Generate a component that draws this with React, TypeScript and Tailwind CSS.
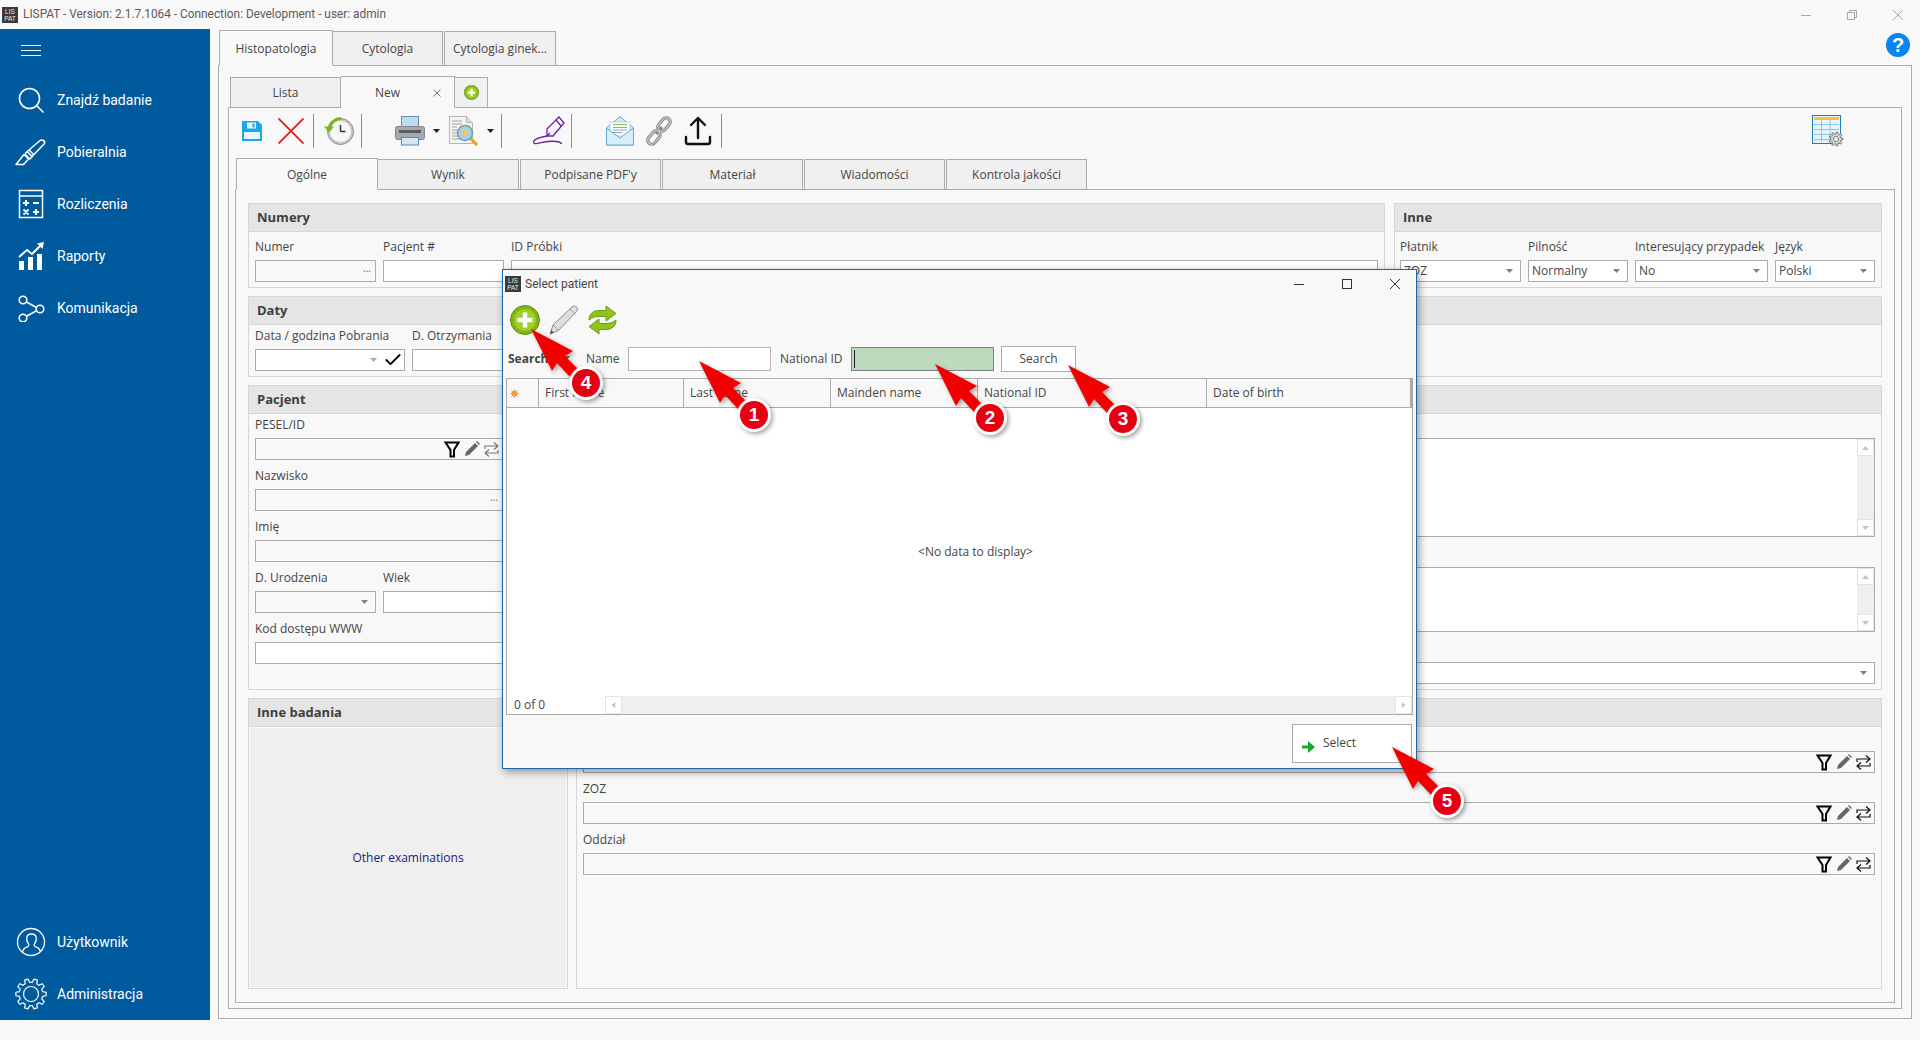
import type { ReactNode } from 'react';
import clsx from 'clsx';
import { Check } from 'lucide-react';

const gearPath = (cx: number, cy: number, outer: number, inner: number, teeth: number) => {
  const pts: string[] = [];
  const step = (Math.PI * 2) / teeth;
  for (let i = 0; i < teeth; i++) {
    const a = i * step;
    const corners: [number, number][] = [
      [inner, a - step * 0.32],
      [outer, a - step * 0.18],
      [outer, a + step * 0.18],
      [inner, a + step * 0.32],
    ];
    corners.forEach(([r, t]) => pts.push(`${(cx + r * Math.cos(t)).toFixed(2)} ${(cy + r * Math.sin(t)).toFixed(2)}`));
  }
  return `M${pts.join('L')}Z`;
};

const LispatLogo = () => (
  <div className="w-[16px] h-[16px] bg-[#3a3a3a] text-[#e8e8e8] flex flex-col items-center justify-center text-[6.5px] leading-[7px] font-['Liberation_Sans',sans-serif] shrink-0">
    <span>LIS</span>
    <span>PAT</span>
  </div>
);

// sidebar icons
const SearchIcon = () => (
  <svg width="28" height="28" viewBox="0 0 28 28" fill="none" stroke="#fff" strokeWidth="1.6">
    <circle cx="12.5" cy="12.5" r="10" />
    <path d="M20 20l6.5 6.5" />
  </svg>
);
const ScalpelIcon = () => (
  <svg width="32" height="28" viewBox="0 0 32 28" fill="none" stroke="#fff" strokeWidth="1.5" strokeLinejoin="round">
    <path d="M1 26.5l8-10 4.5 4.5-5 5.5z" />
    <path d="M10.5 15L25 2.5c2-1.5 5.5 .5 4.5 3L18 17.5l-3 3.5-4.5-4.5z" />
    <path d="M12 13.5l5 5M14 12l5 5" />
  </svg>
);
const CalcIcon = () => (
  <svg width="26" height="30" viewBox="0 0 26 30" fill="none" stroke="#fff" strokeWidth="1.5">
    <rect x="1.5" y="1.5" width="23" height="27" />
    <path d="M1.5 7h23" />
    <path strokeWidth="2" d="M5 14h6M8 11v6M15 14h6M5.5 20.5l5 5M10.5 20.5l-5 5M15 23h6M18 20v6" />
  </svg>
);
const ChartIcon = () => (
  <svg width="26" height="28" viewBox="0 0 26 28" fill="#fff">
    <rect x="1" y="19" width="5" height="9" />
    <rect x="10" y="15" width="5" height="13" />
    <rect x="19" y="12" width="5" height="16" />
    <path d="M1 15l8-7 5 4L24 2" fill="none" stroke="#fff" strokeWidth="2" />
    <path d="M26 0l-7 1.5 5.5 5.5z" />
  </svg>
);
const NodesIcon = () => (
  <svg width="28" height="28" viewBox="0 0 28 28" fill="none" stroke="#fff" strokeWidth="1.6">
    <circle cx="6" cy="6" r="3.8" />
    <circle cx="23" cy="15" r="3.8" />
    <circle cx="6" cy="24" r="3.8" />
    <path d="M9.5 8l10 5.5M9.5 22.2l10-5.5" />
  </svg>
);
const UserIcon = () => (
  <svg width="30" height="30" viewBox="0 0 30 30" fill="none" stroke="#fff" strokeWidth="1.3">
    <circle cx="15" cy="15" r="13.5" />
    <path d="M6.5 25c.5-4 3-4.5 5.5-5.5 1-.5 1-2 .3-3-1.5-2-1.8-4-1.5-6 .4-2.500 2.200-3.500 4.700-3.500s4.300 1 4.700 3.500c.3 2 0 4-1.500 6-.7 1-.7 2.500.3 3 2.500 1 5 1.500 5.500 5.500" />
  </svg>
);
const GearIcon = () => (
  <svg width="32" height="32" viewBox="0 0 32 32" fill="none" stroke="#fff" strokeWidth="1.2" strokeLinejoin="round">
    <path d={gearPath(16, 16, 15.2, 11.8, 10)} />
    <circle cx="16" cy="16" r="7.5" />
  </svg>
);

// toolbar icons
const SaveIcon = () => (
  <svg width="20" height="20" viewBox="0 0 20 20">
    <path d="M0 0h16l4 4v16H0z" fill="#1ba6e6" />
    <rect x="2" y="11" width="16" height="7" fill="#e8f6fd" />
    <rect x="5" y="1.500" width="9" height="6" fill="#e8f6fd" />
    <rect x="10.500" y="2.500" width="2" height="4" fill="#1ba6e6" />
  </svg>
);
const RedX = () => (
  <svg width="26" height="26" viewBox="0 0 26 26" stroke="#e31b1b" strokeWidth="1.8">
    <path d="M.5.5l25 25M25.500.5l-25 25" />
  </svg>
);
const ClockIcon = () => (
  <svg width="30" height="30" viewBox="0 0 30 30">
    <circle cx="16.500" cy="15.500" r="13" fill="#c9c9c9" stroke="#8d8d8d" />
    <circle cx="16.500" cy="15.500" r="10.500" fill="#f7f7f7" />
    <path d="M16.500 9v6.500M16.500 15.500h5" stroke="#333" strokeWidth="1.500" />
    <path d="M17 2.500A13 13 0 0 0 5.500 11" fill="none" stroke="#7ab51d" strokeWidth="3" />
    <path d="M0 10.500h10l-5 6z" fill="#7ab51d" />
  </svg>
);
const PrinterIcon = () => (
  <svg width="30" height="30" viewBox="0 0 30 30">
    <rect x="6.500" y=".5" width="17" height="11" fill="#bcdcf2" stroke="#6e8da8" />
    <rect x=".5" y="10.500" width="29" height="13" rx="2" fill="#a4a9ae" stroke="#80868c" />
    <rect x="4" y="14" width="22" height="3" fill="#555b61" />
    <rect x="6.500" y="21.500" width="17" height="7.500" fill="#d3e8f7" stroke="#4f8ec4" />
  </svg>
);
const DocSearchIcon = () => (
  <svg width="30" height="30" viewBox="0 0 30 30">
    <path d="M.5.5h17l6 6v21H.5z" fill="#f4f4f4" stroke="#b4b4b4" />
    <path d="M17.500.5v6h6" fill="#ddd" stroke="#b4b4b4" />
    <path d="M3 5h10M3 8h10M3 11h5M3 14h5M3 17h5M3 20h6M3 23h9" stroke="#9a9a9a" strokeWidth=".9" />
    <path d="M21 22l7 7" stroke="#e8a020" strokeWidth="3" />
    <circle cx="16" cy="17" r="7.500" fill="#9cd4f2" stroke="#7f98a8" strokeWidth="1.500" />
    <rect x="12" y="14" width="7" height="5" fill="#f6c766" />
  </svg>
);
const SignIcon = () => (
  <svg width="32" height="30" viewBox="0 0 32 30" fill="none" stroke="#6a1fa8" strokeWidth="1.300">
    <path d="M26 1l5 6-11 13h-6v-7z" />
    <path d="M23 4l5 6M14 20l3-3" />
    <path d="M14 20C8 21 0 23 .5 26.500c.5 3 8-.5 14-1 6-.5 12-.5 14 2" strokeLinecap="round" />
  </svg>
);
const MailIcon = () => (
  <svg width="28" height="30" viewBox="0 0 28 30">
    <path d="M.5 12L14 .5 27.500 12v17H.5z" fill="#cde8f8" stroke="#6aa8d4" />
    <rect x="4" y="6" width="20" height="14" fill="#f7fbfe" stroke="#a8c8dc" strokeWidth=".6" />
    <path d="M7 8.500h14" stroke="#8bbf3a" strokeWidth="1" />
    <path d="M7 11.500h14M7 14h14M7 16.500h9" stroke="#8aa0ae" strokeWidth=".9" />
    <path d="M.5 12L14 22l13.500-10v17H.5z" fill="#d6edfa" stroke="#6aa8d4" />
  </svg>
);
const ChainIcon = () => (
  <svg width="28" height="30" viewBox="0 0 28 30" fill="none">
    <g stroke="#8a8a8a" strokeWidth="3.200">
      <rect x="15" y="1" width="8" height="15" rx="4" transform="rotate(40 19 8.500)" />
      <rect x="5" y="14" width="8" height="15" rx="4" transform="rotate(40 9 21.500)" />
      <path d="M11 18l6-7" />
    </g>
    <g stroke="#d8d8d8" strokeWidth="1">
      <rect x="15" y="1" width="8" height="15" rx="4" transform="rotate(40 19 8.500)" />
      <rect x="5" y="14" width="8" height="15" rx="4" transform="rotate(40 9 21.500)" />
    </g>
  </svg>
);
const UploadIcon = () => (
  <svg width="28" height="30" viewBox="0 0 28 30" fill="none" stroke="#111" strokeWidth="2.400" strokeLinecap="round" strokeLinejoin="round">
    <path d="M14 2v20M7 9l7-7 7 7" />
    <path d="M2 21v5a2 2 0 0 0 2 2h20a2 2 0 0 0 2-2v-5" />
  </svg>
);
const TableGearIcon = () => (
  <svg width="32" height="32" viewBox="0 0 32 32">
    <rect x=".5" y=".5" width="28" height="28" fill="#e6f3fb" stroke="#1c80bd" />
    <rect x="2" y="2" width="25" height="3" fill="#f5c04a" />
    <path d="M2 9.500h25M2 14.500h25M2 19.500h25M2 24.500h25M9.500 5v22M18 5v22" stroke="#8cc4e4" strokeWidth="1" fill="none" />
    <path d={gearPath(24, 24, 7, 5, 9)} fill="#d5d5d5" stroke="#7d7d7d" />
    <circle cx="24" cy="24" r="2.500" fill="#f8f8f8" stroke="#7d7d7d" />
  </svg>
);
const PlusGreen = ({ size }: { size: number }) => (
  <svg width={size} height={size} viewBox="0 0 30 30">
    <circle cx="15" cy="15" r="14.500" fill="#82b414" stroke="#5f8f0c" />
    <circle cx="15" cy="15" r="11" fill="#a1cd2a" />
    <path d="M15 7.500v15M7.500 15h15" stroke="#fff" strokeWidth="4.500" />
  </svg>
);
const PencilGray = () => (
  <svg width="30" height="30" viewBox="0 0 30 30">
    <path d="M1 29l3-9L23 2c1.500-1.300 3.500-1 4.500 0s1.300 3 0 4.500L9.500 25.500z" fill="#dedede" stroke="#8c8c8c" />
    <path d="M4 20l5.500 5.500M21 4l5.500 5.500" stroke="#999" />
    <path d="M1 29l1.200-4 2.800 2.800z" fill="#555" />
  </svg>
);
const RefreshGreen = () => (
  <svg width="31" height="30" viewBox="0 0 31 30">
    <path d="M2 15C2 8 7 5.500 12 5.500h7V1l10 7.500L19 16v-4.500h-7c-4 0-7 1-10 3.500z" fill="#8fc31f" stroke="#6f9e14" />
    <path d="M29 15c0 7-5 9.500-10 9.500h-7V29L2 21.500 12 14v4.500h7c4 0 7-1 10-3.500z" fill="#8fc31f" stroke="#6f9e14" />
  </svg>
);
const ArrowRightGreen = () => (
  <svg width="13" height="12" viewBox="0 0 13 12">
    <path d="M0 4.500h6V0l7 6-7 6V7.500H0z" fill="#14a82c" />
  </svg>
);
const HeaderStar = () => (
  <svg width="9" height="9" viewBox="0 0 9 9" stroke="#f39a3c" strokeWidth="1">
    <path d="M4.500 0v9M0 4.500h9M1.300 1.300l6.400 6.400M7.700 1.300L1.300 7.700" />
    <circle cx="4.500" cy="4.500" r="2.500" fill="#f39a3c" />
  </svg>
);

const Caret = ({ className }: { className?: string }) => (
  <svg width="7" height="4" viewBox="0 0 7 4" className={className} fill="currentColor">
    <path d="M0 0h7L3.500 4z" />
  </svg>
);

const LookupIcons = ({ muted }: { muted?: boolean }) => (
  <div className="ml-auto flex items-center gap-[4px] shrink-0">
    <svg width="16" height="17" viewBox="0 0 16 17" fill="none" stroke="#000" strokeWidth="2">
      <path d="M1.500 1.500h13L10 9v6.500H6.500V9z" />
    </svg>
    <svg width="16" height="16" viewBox="0 0 16 16" fill="#666">
      <path d="M1 15l1-4L11 2l3 3-9 9z" />
      <path d="M12 1l1-1 3 3-1 1z" />
    </svg>
    <svg width="15" height="17" viewBox="0 0 15 17" fill="none" stroke={muted ? '#777' : '#111'} strokeWidth="1.200">
      <path d="M1 8V5h13M10 1.500L14 5l-4 3.500" />
      <path d="M14 9v3H1M5 8.500L1 12l4 3.500" />
    </svg>
  </div>
);

const Box = ({ className, children }: { className?: string; children?: ReactNode }) => (
  <div className={clsx('h-[22px] border border-[#ababab] flex items-center pl-[3px] pr-[3px] overflow-hidden', className)}>
    {children}
  </div>
);

const Dots = () => <span className="-mt-[5px] text-[10px] text-[#666]">...</span>;

const Field = ({ label, className, children }: { label?: string; className?: string; children: ReactNode }) => (
  <div className={className}>
    <div className="h-[16px] mb-[5px] leading-[16px] whitespace-nowrap">{label}</div>
    {children}
  </div>
);

const Combo = ({ value, className }: { value?: string; className?: string }) => (
  <Box className={clsx('bg-white', className)}>
    <span>{value}</span>
    <Caret className="ml-auto mr-[4px] text-[#808080]" />
  </Box>
);

const Group = ({ title, className, bodyClassName, children }: { title?: string; className?: string; bodyClassName?: string; children?: ReactNode }) => (
  <section className={clsx('border border-[#d6d6d6] flex flex-col', className)}>
    <div className="h-[28px] shrink-0 bg-[#e5e5e5] border-b border-[#d6d6d6] flex items-center pl-[8px] font-bold text-[13px] text-[#404040]">
      {title}
    </div>
    <div className={clsx('flex-1 min-h-0', bodyClassName)}>{children}</div>
  </section>
);

const Tab = ({ label, active, className, children }: { label: string; active?: boolean; className?: string; children?: ReactNode }) => (
  <div
    className={clsx(
      'relative -mb-px flex items-center justify-center pt-px border border-[#ababab] whitespace-nowrap',
      active ? 'z-10 bg-[#f8f8f8] border-b-[#f8f8f8]' : 'bg-[#f0f0f0]',
      className,
    )}
  >
    {label}
    {children}
  </div>
);

const Sep = ({ className }: { className?: string }) => <div className={clsx('w-px h-[34px] bg-[#8f8f8f] shrink-0', className)} />;

const VScroll = () => (
  <div className="w-[17px] h-full ml-auto bg-[#efefef] flex flex-col justify-between">
    <div className="h-[17px] bg-white border border-[#e4e4e4] flex items-center justify-center">
      <Caret className="rotate-180 text-[#c4c4c4]" />
    </div>
    <div className="h-[17px] bg-white border border-[#e4e4e4] flex items-center justify-center">
      <Caret className="text-[#c4c4c4]" />
    </div>
  </div>
);

const NavItem = ({ icon, label }: { icon: ReactNode; label: string }) => (
  <div className="h-[52px] flex items-center">
    <div className="w-[62px] shrink-0 flex items-center justify-center">{icon}</div>
    <span className="-ml-[5px] text-[14px] text-white font-['Roboto',sans-serif]">{label}</span>
  </div>
);

const Callout = ({ n, className }: { n: number; className: string }) => (
  <div className={clsx('absolute z-30 w-[76px] h-[74px]', className)}>
    <svg width="76" height="74" viewBox="0 0 76 74" className="drop-shadow-[2px_2px_2px_rgba(0,0,0,0.35)]">
      <path d="M0 0L42 22 34 27 49 42 41 50 26 34 21 42z" fill="#f20000" />
      <circle cx="55" cy="54" r="17" fill="#fff" />
      <circle cx="55" cy="54" r="14" fill="#e60012" />
    </svg>
    <span className="absolute left-[39px] top-[38px] w-[32px] h-[32px] flex items-center justify-center text-white font-bold text-[19px] font-['Liberation_Sans',sans-serif]">
      {n}
    </span>
  </div>
);

const columns = [
  { name: 'First name', w: 'w-[145px]' },
  { name: 'Last name', w: 'w-[147px]' },
  { name: 'Mainden name', w: 'w-[147px]' },
  { name: 'National ID', w: 'w-[229px]' },
  { name: 'Date of birth', w: 'flex-1' },
];

const SelectPatient = () => (
  <div className="absolute left-[502px] top-[269px] z-20 w-[915px] h-[500px] bg-[#f8f8f8] border border-[#1a68a8] shadow-[2px_3px_8px_rgba(0,0,0,0.4)] flex flex-col">
    <div className="h-[26px] shrink-0 flex items-center pl-[2px] pt-[1px]">
      <LispatLogo />
      <span className="ml-[4px] font-['Roboto',sans-serif]">Select patient</span>
      <div className="ml-auto flex items-center text-[#333] pr-[16px] gap-[38px]">
        <svg width="10" height="10" viewBox="0 0 10 10" stroke="currentColor"><path d="M0 5.500h10" /></svg>
        <svg width="10" height="10" viewBox="0 0 10 10" fill="none" stroke="currentColor"><rect x=".5" y=".5" width="9" height="9" /></svg>
        <svg width="10" height="10" viewBox="0 0 10 10" stroke="currentColor"><path d="M0 0l10 10M10 0L0 10" /></svg>
      </div>
    </div>
    <div className="h-[50px] shrink-0 flex items-start pl-[7px] pt-[9px]">
      <PlusGreen size={30} />
      <div className="ml-[9px]"><PencilGray /></div>
      <div className="ml-[8px]"><RefreshGreen /></div>
    </div>
    <div className="h-[26px] shrink-0 flex items-center pl-[5px]">
      <span className="font-bold w-[78px] whitespace-nowrap">Search for</span>
      <span className="w-[42px]">Name</span>
      <div className="w-[143px] h-[24px] border border-[#b4b4b4] bg-white" />
      <span className="ml-[9px] w-[71px] whitespace-nowrap">National ID</span>
      <div className="w-[143px] h-[24px] border border-[#7f7f7f] bg-[#bedabe] flex items-center pl-[2px]">
        <div className="w-px h-[18px] bg-[#222]" />
      </div>
      <button className="ml-[7px] w-[75px] h-[26px] border border-[#ababab] bg-white">Search</button>
    </div>
    <div className="mt-[6px] mx-[3px] h-[337px] shrink-0 border border-[#ababab] flex flex-col bg-white">
      <div className="h-[29px] shrink-0 bg-[#f8f8f8] border-b border-[#ababab] border-r-2 flex">
        <div className="w-[32px] shrink-0 border-r border-[#ababab] flex items-center pl-[3px]">
          <HeaderStar />
        </div>
        {columns.map(c => (
          <div key={c.name} className={clsx(c.w, 'flex items-center pl-[6px] border-r border-[#ababab] last:border-r-0')}>
            {c.name}
          </div>
        ))}
      </div>
      <div className="flex-1 flex items-center justify-center pl-[32px]">&lt;No data to display&gt;</div>
      <div className="h-[18px] shrink-0 flex">
        <div className="w-[98px] pl-[7px] flex items-center">0 of 0</div>
        <div className="flex-1 bg-[#efefef] flex justify-between">
          <div className="w-[17px] bg-white border border-[#e4e4e4] flex items-center justify-center">
            <Caret className="rotate-90 text-[#c4c4c4]" />
          </div>
          <div className="w-[17px] bg-white border border-[#e4e4e4] flex items-center justify-center">
            <Caret className="-rotate-90 text-[#c4c4c4]" />
          </div>
        </div>
      </div>
    </div>
    <div className="flex-1 flex justify-end items-start pt-[9px] pr-[4px]">
      <button className="w-[120px] h-[39px] border border-[#ababab] bg-white flex items-start pl-[9px] pt-[9px] gap-[8px]">
        <span className="mt-[7px]"><ArrowRightGreen /></span>
        <span>Select</span>
      </button>
    </div>
  </div>
);

const Sidebar = () => (
  <aside className="w-[210px] shrink-0 bg-[#005a9e] flex flex-col overflow-hidden">
    <div className="h-[45px] shrink-0 pl-[21px] pt-[16px] flex flex-col gap-[4px]">
      <div className="w-[20px] h-px bg-white" />
      <div className="w-[20px] h-px bg-white" />
      <div className="w-[20px] h-px bg-white" />
    </div>
    <nav className="flex-1">
      <NavItem icon={<SearchIcon />} label="Znajdź badanie" />
      <NavItem icon={<ScalpelIcon />} label="Pobieralnia" />
      <NavItem icon={<CalcIcon />} label="Rozliczenia" />
      <NavItem icon={<ChartIcon />} label="Raporty" />
      <NavItem icon={<NodesIcon />} label="Komunikacja" />
    </nav>
    <div>
      <NavItem icon={<UserIcon />} label="Użytkownik" />
      <NavItem icon={<GearIcon />} label="Administracja" />
    </div>
  </aside>
);

const Toolbar = () => (
  <div className="h-[49px] shrink-0 flex items-center pb-[3px]">
    <div className="ml-[13px]"><SaveIcon /></div>
    <div className="ml-[16px]"><RedX /></div>
    <Sep className="ml-[9px]" />
    <div className="ml-[10px]"><ClockIcon /></div>
    <Sep className="ml-[7px]" />
    <div className="ml-[33px]"><PrinterIcon /></div>
    <Caret className="ml-[8px] text-[#222]" />
    <div className="ml-[9px]"><DocSearchIcon /></div>
    <Caret className="ml-[8px] text-[#222]" />
    <Sep className="ml-[7px]" />
    <div className="ml-[31px]"><SignIcon /></div>
    <Sep className="ml-[6px]" />
    <div className="ml-[34px]"><MailIcon /></div>
    <div className="ml-[11px]"><ChainIcon /></div>
    <div className="ml-[11px]"><UploadIcon /></div>
    <Sep className="ml-[9px]" />
    <div className="ml-auto mr-[57px]"><TableGearIcon /></div>
  </div>
);

const GeneralTab = () => (
  <div className="flex-1 border border-[#ababab] pt-[13px] pb-[13px] px-[12px] flex flex-col gap-[8px] min-h-0">
    <div className="flex gap-[9px] h-[85px] shrink-0">
      <Group title="Numery" className="w-[1137px]" bodyClassName="px-[6px] pt-[7px] flex gap-[7px]">
        <Field label="Numer" className="w-[121px]">
          <Box className="justify-end pr-[4px]"><Dots /></Box>
        </Field>
        <Field label="Pacjent #" className="w-[121px]"><Box className="bg-white" /></Field>
        <Field label="ID Próbki" className="flex-1"><Box className="bg-white" /></Field>
      </Group>
      <Group title="Inne" className="flex-1" bodyClassName="pl-[5px] pr-[6px] pt-[7px] flex gap-[7px]">
        <Field label="Płatnik" className="w-[121px]"><Combo value="ZOZ" /></Field>
        <Field label="Pilność" className="w-[100px]"><Combo value="Normalny" /></Field>
        <Field label="Interesujący przypadek" className="w-[133px]"><Combo value="No" /></Field>
        <Field label="Język" className="w-[100px]"><Combo value="Polski" /></Field>
      </Group>
    </div>

    <Group title="Daty" className="h-[81px] shrink-0" bodyClassName="px-[6px] pt-[3px] flex gap-[7px]">
      <Field label="Data / godzina Pobrania" className="w-[150px]">
        <Box className="bg-white border-[#555]">
          <Caret className="ml-auto text-[#aaa]" />
          <Check size={20} strokeWidth={2.2} className="ml-[6px] text-black -mr-[2px]" />
        </Box>
      </Field>
      <Field label="D. Otrzymania" className="w-[150px]"><Combo /></Field>
    </Group>

    <Group title="Pacjent" className="h-[305px] shrink-0" bodyClassName="px-[6px] pt-[3px] flex gap-[8px]">
      <div className="w-[248px] shrink-0 flex flex-col gap-[8px]">
        <Field label="PESEL/ID"><Box><LookupIcons muted /></Box></Field>
        <Field label="Nazwisko"><Box className="justify-end pr-[4px]"><Dots /></Box></Field>
        <Field label="Imię"><Box /></Field>
        <div className="flex gap-[7px]">
          <Field label="D. Urodzenia" className="w-[121px]">
            <Box><Caret className="ml-auto mr-[4px] text-[#808080]" /></Box>
          </Field>
          <Field label="Wiek" className="flex-1"><Box className="bg-white" /></Field>
        </div>
        <Field label="Kod dostępu WWW"><Box className="bg-white" /></Field>
      </div>
      <div className="flex-1 flex flex-col gap-[9px]">
        <Field><div className="h-[99px] border border-[#ababab] bg-white"><VScroll /></div></Field>
        <Field><div className="h-[65px] border border-[#ababab] bg-white"><VScroll /></div></Field>
        <Field><Combo /></Field>
      </div>
    </Group>

    <div className="flex-1 flex gap-[8px] min-h-0">
      <Group title="Inne badania" className="w-[320px] shrink-0" bodyClassName="m-[1px] bg-[#efefef] flex items-center justify-center">
        <span className="text-[#1a1a7a]">Other examinations</span>
      </Group>
      <Group className="flex-1" bodyClassName="px-[6px] pt-[3px] flex flex-col gap-[8px]">
        <Field><Box><LookupIcons /></Box></Field>
        <Field label="ZOZ"><Box><LookupIcons /></Box></Field>
        <Field label="Oddział"><Box><LookupIcons /></Box></Field>
      </Group>
    </div>
  </div>
);

export default function App() {
  return (
    <div className="relative w-[1920px] h-[1040px] overflow-hidden bg-[#f8f8f8] text-[12px] text-[#454545] font-['Open_Sans',sans-serif]">
      <header className="h-[29px] flex items-center pl-[2px] text-[#5a5a5a]">
        <LispatLogo />
        <span className="ml-[5px] text-[11.85px] font-['Roboto',sans-serif]">LISPAT - Version: 2.1.7.1064 - Connection: Development - user: admin</span>
        <div className="ml-auto flex items-center gap-[36px] pr-[17px] text-[#a8a8a8]">
          <svg width="10" height="10" viewBox="0 0 10 10" stroke="currentColor"><path d="M0 5.500h10" /></svg>
          <svg width="10" height="10" viewBox="0 0 10 10" fill="none" stroke="currentColor"><path d="M.5 2.500h7v7h-7zM2.500 2.500v-2h7v7h-2" /></svg>
          <svg width="10" height="10" viewBox="0 0 10 10" stroke="currentColor"><path d="M0 0l10 10M10 0L0 10" /></svg>
        </div>
      </header>

      <div className="flex h-[991px]">
        <Sidebar />
        <main className="ml-[8px] w-[1694px] flex flex-col h-[990px]">
          <div className="h-[36px] shrink-0 flex items-end pl-px">
            <Tab label="Histopatologia" active className="w-[114px] h-[36px]" />
            <Tab label="Cytologia" className="w-[110px] h-[35px] border-l-0" />
            <Tab label="Cytologia ginek..." className="ml-px w-[112px] h-[35px]" />
          </div>
          <div className="flex-1 border border-[#ababab] pt-[9px] px-[9px] pb-[9px] flex flex-col min-h-0">
            <div className="h-[32px] shrink-0 flex items-end pl-[2px]">
              <Tab label="Lista" className="w-[111px] h-[31px]" />
              <Tab label="New" active className="w-[114px] h-[32px] border-l-0 pr-[20px]">
                <svg width="8" height="8" viewBox="0 0 8 8" stroke="#777" className="absolute right-[13px] top-[12px]">
                  <path d="M.5.5l7 7M7.500.5l-7 7" />
                </svg>
              </Tab>
              <div className="w-[33px] h-[31px] -mb-px border border-l-0 border-[#ababab] bg-[#f0f0f0] flex items-center justify-center">
                <PlusGreen size={15} />
              </div>
            </div>
            <div className="flex-1 border border-[#ababab] px-[6px] pb-[5px] flex flex-col min-h-0">
              <div className="-mx-[6px]"><Toolbar /></div>
              <div className="h-[32px] shrink-0 flex items-end pl-px">
                <Tab label="Ogólne" active className="w-[142px] h-[32px]" />
                <Tab label="Wynik" className="w-[141px] h-[31px] border-l-0" />
                <Tab label="Podpisane PDF'y" className="ml-px w-[141px] h-[31px]" />
                <Tab label="Materiał" className="ml-px w-[141px] h-[31px]" />
                <Tab label="Wiadomości" className="ml-px w-[141px] h-[31px]" />
                <Tab label="Kontrola jakości" className="ml-px w-[141px] h-[31px]" />
              </div>
              <GeneralTab />
            </div>
          </div>
        </main>
      </div>

      <div className="absolute left-[1886px] top-[33px] w-[24px] h-[24px] rounded-full bg-[#0a84f0] text-white font-bold text-[20px] flex items-center justify-center font-['Liberation_Sans',sans-serif]">
        ?
      </div>

      <SelectPatient />

      <Callout n={1} className="left-[699px] top-[361px]" />
      <Callout n={2} className="left-[935px] top-[364px]" />
      <Callout n={3} className="left-[1068px] top-[365px]" />
      <Callout n={4} className="left-[531px] top-[329px]" />
      <Callout n={5} className="left-[1392px] top-[747px]" />
    </div>
  );
}
